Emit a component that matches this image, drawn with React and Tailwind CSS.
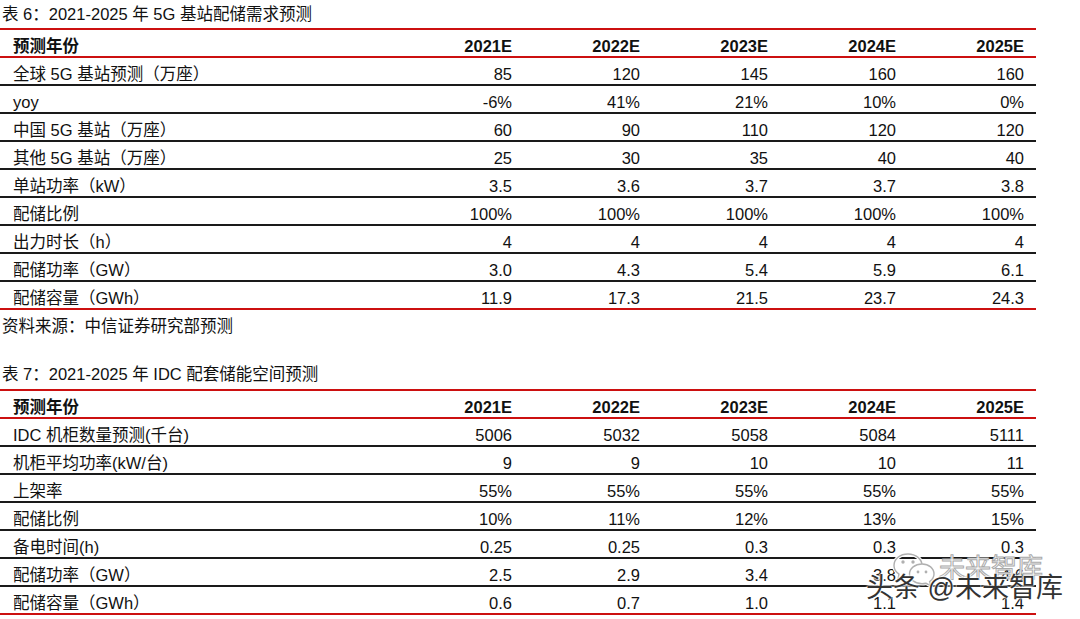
import React from 'react';

const YEARS = ['2021E', '2022E', '2023E', '2024E', '2025E'];

const TABLE_5G = [
  ['全球 5G 基站预测（万座）', ['85', '120', '145', '160', '160']],
  ['yoy', ['-6%', '41%', '21%', '10%', '0%']],
  ['中国 5G 基站（万座）', ['60', '90', '110', '120', '120']],
  ['其他 5G 基站（万座）', ['25', '30', '35', '40', '40']],
  ['单站功率（kW）', ['3.5', '3.6', '3.7', '3.7', '3.8']],
  ['配储比例', ['100%', '100%', '100%', '100%', '100%']],
  ['出力时长（h）', ['4', '4', '4', '4', '4']],
  ['配储功率（GW）', ['3.0', '4.3', '5.4', '5.9', '6.1']],
  ['配储容量（GWh）', ['11.9', '17.3', '21.5', '23.7', '24.3']],
];

const TABLE_IDC = [
  ['IDC 机柜数量预测(千台)', ['5006', '5032', '5058', '5084', '5111']],
  ['机柜平均功率(kW/台)', ['9', '9', '10', '10', '11']],
  ['上架率', ['55%', '55%', '55%', '55%', '55%']],
  ['配储比例', ['10%', '11%', '12%', '13%', '15%']],
  ['备电时间(h)', ['0.25', '0.25', '0.3', '0.3', '0.3']],
  ['配储功率（GW）', ['2.5', '2.9', '3.4', '3.8', '4.6']],
  ['配储容量（GWh）', ['0.6', '0.7', '1.0', '1.1', '1.4']],
];

const Row = ({ label, values, bold, last }) => (
  <div
    className={`grid grid-cols-[396px_repeat(5,128px)] h-[28px] border-b-2 ${
      last || bold ? 'border-[#cc1010]' : 'border-[#1a1a1a]'
    } ${bold ? 'font-bold' : ''}`}
  >
    <div className="flex items-center pt-[4px] pl-[13px]">{label}</div>
    {values.map((v, i) => (
      <div key={i} className="flex items-center justify-end pt-[4px] pr-[12px]">
        {v}
      </div>
    ))}
  </div>
);

const DataTable = ({ rows }) => (
  <div className="w-[1036px] border-t-2 border-[#cc1010]">
    <Row label="预测年份" values={YEARS} bold />
    {rows.map(([label, values], i) => (
      <Row key={label + i} label={label} values={values} last={i === rows.length - 1} />
    ))}
  </div>
);

const WeChatMark = () => (
  <svg width="46" height="36" viewBox="0 0 46 36" fill="none">
    <g stroke="#fff" strokeWidth="3.5">
      <path d="M16 3C8 3 2 8 2 14.5c0 3.6 2 6.6 5 8.6L6 28l5.2-2.8c1.5.4 3.1.6 4.8.6 8 0 14-5.1 14-11.4S24 3 16 3z" />
      <path d="M30 13c-7 0-12.5 4.4-12.5 9.9S23 32.8 30 32.8c1.4 0 2.7-.2 4-.5l4.6 2.4-1-4.1c2.6-1.8 4.4-4.5 4.4-7.6C42 17.4 37 13 30 13z" />
    </g>
    <g stroke="#b0b0b0" strokeWidth="1.4">
      <path d="M16 3C8 3 2 8 2 14.5c0 3.6 2 6.6 5 8.6L6 28l5.2-2.8c1.5.4 3.1.6 4.8.6 8 0 14-5.1 14-11.4S24 3 16 3z" />
      <path d="M30 13c-7 0-12.5 4.4-12.5 9.9S23 32.8 30 32.8c1.4 0 2.7-.2 4-.5l4.6 2.4-1-4.1c2.6-1.8 4.4-4.5 4.4-7.6C42 17.4 37 13 30 13z" fill="#fff" />
    </g>
    <circle cx="11" cy="11" r="1.7" fill="#b0b0b0" />
    <circle cx="21" cy="11" r="1.7" fill="#b0b0b0" />
    <circle cx="26" cy="21" r="1.4" fill="#b0b0b0" />
    <circle cx="34" cy="21" r="1.4" fill="#b0b0b0" />
  </svg>
);

export default function App() {
  return (
    <div
      className="relative w-[1080px] h-[619px] overflow-hidden bg-white text-[16.5px] text-[#111]"
      style={{ fontFamily: '"Liberation Sans", "Noto Sans CJK SC", sans-serif' }}
    >
      <div className="h-[28px] flex items-center pl-[2px]">表 6：2021-2025 年 5G 基站配储需求预测</div>
      <DataTable rows={TABLE_5G} />
      <div className="h-[32px] flex items-center pl-[2px]">资料来源：中信证券研究部预测</div>
      <div className="h-[19px]" />
      <div className="h-[28px] flex items-center pl-[2px] pb-[1px]">表 7：2021-2025 年 IDC 配套储能空间预测</div>
      <DataTable rows={TABLE_IDC} />

      {/* watermark */}
      <div className="absolute left-[892px] top-[551px]">
        <WeChatMark />
      </div>
      <div className="absolute left-[939px] top-[552px] text-[26px] leading-[32px] text-white [-webkit-text-stroke:1px_#aaaaaa]">
        未来智库
      </div>
      <div className="absolute left-[866px] top-[571px] text-[27px] leading-[34px] text-[#333] [text-shadow:0_0_2px_#fff,0_0_2px_#fff,0_0_3px_#fff]">
        头条 @未来智库
      </div>
    </div>
  );
}
